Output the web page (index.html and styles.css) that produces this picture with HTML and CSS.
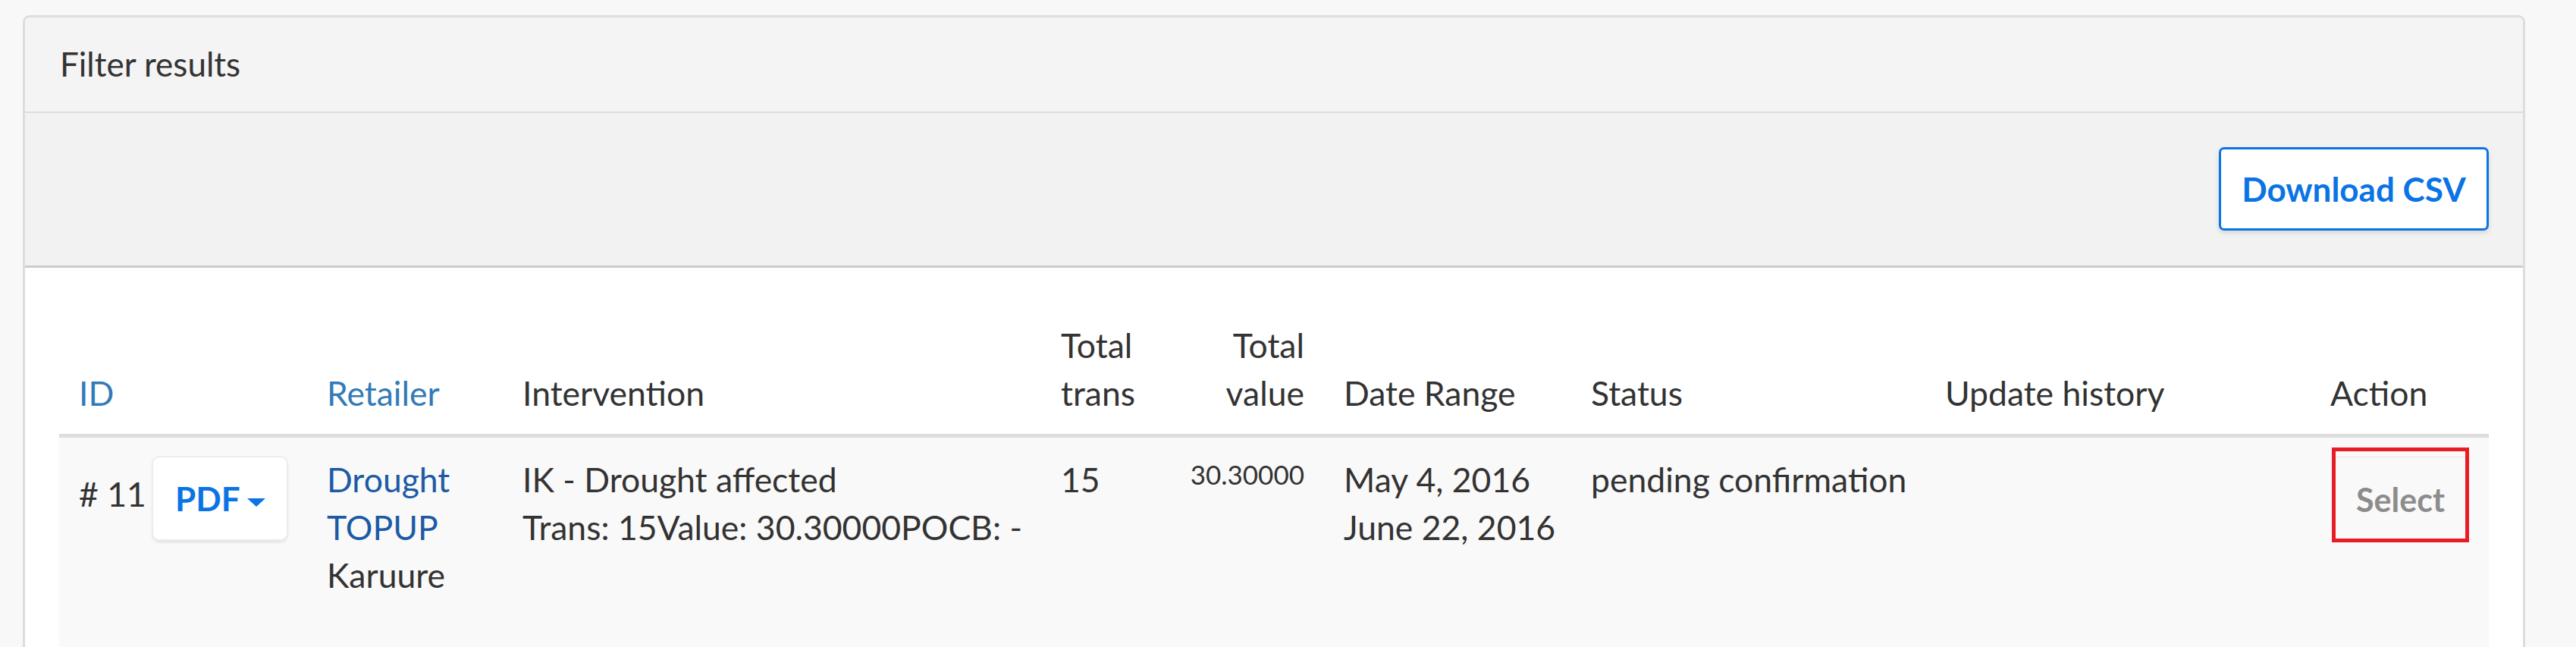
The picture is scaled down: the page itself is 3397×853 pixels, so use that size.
FILE: index.html
```html
<!DOCTYPE html>
<html lang="en">
<head>
<meta charset="utf-8">
<title>Filter results</title>
<link rel="stylesheet" href="styles.css">
</head>
<body>
<div class="panel">
  <div class="panel-heading">Filter results</div>
  <div class="toolbar">
    <button class="btn-csv" type="button">Download CSV</button>
  </div>
  <div class="panel-body">
    <table class="results">
      <colgroup>
        <col class="c-id">
        <col class="c-retailer">
        <col class="c-intervention">
        <col class="c-trans">
        <col class="c-value">
        <col class="c-date">
        <col class="c-status">
        <col class="c-history">
        <col class="c-action">
      </colgroup>
      <thead>
        <tr>
          <th><a class="sort-link" href="#">ID</a></th>
          <th><a class="sort-link" href="#">Retailer</a></th>
          <th>Intervention</th>
          <th>Total trans</th>
          <th class="num">Total value</th>
          <th>Date Range</th>
          <th>Status</th>
          <th>Update history</th>
          <th>Action</th>
        </tr>
      </thead>
      <tbody>
        <tr>
          <td class="nowrap"><span class="rid"># 11</span><button class="btn-pdf" type="button">PDF<span class="caret"></span></button></td>
          <td><a class="retailer-link" href="#">Drought TOPUP</a><div>Karuure</div></td>
          <td><div>IK - Drought affected</div><div class="nowrap">Trans: 15Value: 30.30000POCB: -</div></td>
          <td>15</td>
          <td class="num small">30.30000</td>
          <td><div class="nowrap">May 4, 2016</div><div class="nowrap">June 22, 2016</div></td>
          <td class="nowrap">pending confirmation</td>
          <td></td>
          <td><button class="btn-select" type="button">Select</button></td>
        </tr>
      </tbody>
    </table>
  </div>
</div>
</body>
</html>
```

FILE: styles.css
```css
html, body {
  margin: 0;
  padding: 0;
}

body {
  background: #f8f8f8;
  font-family: "Lato", "Open Sans", sans-serif;
  font-size: 44.5px;
  line-height: 63px;
  color: #333333;
  overflow: hidden;
  height: 853px;
}

.panel {
  margin: 20px 0 0 30px;
  width: 3300px;
  box-sizing: border-box;
  border: 3px solid #dddddd;
  border-radius: 9px;
  background: #ffffff;
  overflow: hidden;
}

.panel-heading {
  background: #f4f4f4;
  border-bottom: 2px solid #dddddd;
  padding: 30px 46px 31px;
  color: #333333;
  font-size: 44px;
}

.toolbar {
  background: #f2f2f2;
  border-bottom: 3px solid #cccccc;
  padding: 45px 45px 46px;
  display: flex;
  justify-content: flex-end;
}

.btn-csv {
  box-sizing: border-box;
  height: 110px;
  width: 356px;
  background: #ffffff;
  border: 3px solid #0b74e5;
  border-radius: 7px;
  box-shadow: 0 3px 6px rgba(0, 0, 0, 0.12);
  color: #0b74e5;
  font-family: "Lato", "Open Sans", sans-serif;
  font-weight: 700;
  font-size: 44px;
  line-height: 60px;
  padding: 0;
}

.panel-body {
  padding: 47px 45px 0;
}

.results {
  width: 3204px;
  table-layout: fixed;
  border-collapse: collapse;
}

.c-id { width: 327px; }
.c-retailer { width: 258px; }
.c-intervention { width: 710px; }
.c-trans { width: 153px; }
.c-value { width: 220px; }
.c-date { width: 326px; }
.c-status { width: 467px; }
.c-history { width: 508px; }
.c-action { width: 235px; }

.results th {
  text-align: left;
  font-weight: 400;
  vertical-align: bottom;
  padding: 23px 26px;
  border-bottom: 5px solid #dddddd;
}

.results td {
  vertical-align: top;
  padding: 23px 26px;
  height: 300px;
  box-sizing: border-box;
}

.results tbody tr {
  background: #f9f9f9;
}

.results .num {
  text-align: right;
}

.results td.small {
  font-size: 35px;
  line-height: 50px;
}

.nowrap {
  white-space: nowrap;
}

.sort-link {
  color: #337ab7;
  text-decoration: none;
}

.retailer-link {
  color: #1d5aa5;
  text-decoration: none;
}

.rid {
  margin-right: 9px;
}

.btn-pdf {
  display: inline-block;
  vertical-align: -6px;
  margin-top: 3px;
  box-sizing: border-box;
  width: 176px;
  height: 108px;
  padding: 0 0 0 1px;
  border: 0;
  border-radius: 8px;
  background: #ffffff;
  box-shadow: 0 0 0 2px #ececec, 0 3px 5px rgba(0, 0, 0, 0.14);
  color: #0b74e5;
  font-family: "Lato", "Open Sans", sans-serif;
  font-weight: 700;
  font-size: 44px;
  line-height: 108px;
}

.caret {
  display: inline-block;
  width: 0;
  height: 0;
  margin-left: 9px;
  vertical-align: 6px;
  border-left: 12px solid transparent;
  border-right: 12px solid transparent;
  border-top: 11px solid #0b74e5;
}

.btn-select {
  display: block;
  box-sizing: border-box;
  margin: -10px 0 0 2px;
  width: 181px;
  height: 125px;
  padding: 0;
  border: 5px solid #e81c25;
  background: #f9f9f9;
  box-shadow: inset 0 6px 0 #f9f9f9, inset 0 9px 0 #f1f1f1;
  color: #8c8c8c;
  font-family: "Lato", "Open Sans", sans-serif;
  font-weight: 700;
  font-size: 43px;
  line-height: 60px;
  padding-top: 12px;
}
```
